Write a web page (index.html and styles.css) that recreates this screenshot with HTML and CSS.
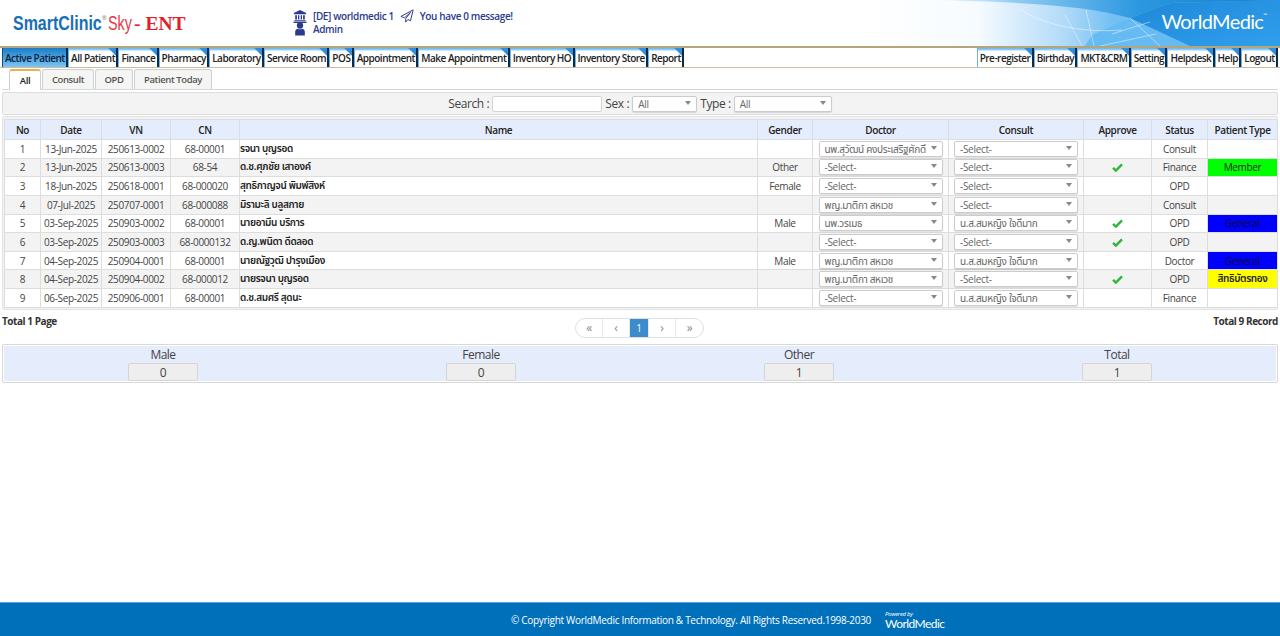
FILE: index.html
```html
<!DOCTYPE html>
<html lang="en">

<head>
    <meta charset="UTF-8">
    <meta name="viewport" content="width=device-width, initial-scale=1.0">
    <title>SmartClinic Sky - ENT</title>
    <link rel="stylesheet" href="styles.css">
</head>

<body>
    <div class="page">
        <header class="top">
            <svg class="top-art" viewBox="0 0 420 46">
                <defs>
                    <linearGradient id="artBase" x1="0" y1="0" x2="1" y2="0">
                        <stop offset="0" stop-color="#ffffff" />
                        <stop offset="0.28" stop-color="#f6fbff" />
                        <stop offset="0.48" stop-color="#b4dcf9" />
                        <stop offset="0.6" stop-color="#74c0f3" />
                        <stop offset="1" stop-color="#4aaeee" />
                    </linearGradient>
                    <linearGradient id="artBand" x1="0" y1="0" x2="1" y2="0">
                        <stop offset="0" stop-color="#ffffff" />
                        <stop offset="0.25" stop-color="#8fcaf2" />
                        <stop offset="0.6" stop-color="#2a97e0" />
                        <stop offset="1" stop-color="#1580cc" />
                    </linearGradient>
                    <linearGradient id="artRight" x1="0" y1="0" x2="1" y2="1">
                        <stop offset="0" stop-color="#1f88d8" />
                        <stop offset="1" stop-color="#2f9fec" />
                    </linearGradient>
                </defs>
                <rect width="420" height="46" fill="url(#artBase)" />
                <path d="M232 35L270 18L360 46H225Z" fill="#67bbf3" />
                <path d="M270 18L310 3L420 0V46H330Z" fill="url(#artRight)" />
                <path d="M70 0C160 2 225 5 270 18L310 3L420 0Z" fill="url(#artBand)" />
                <path d="M160 9C185 26 225 33 262 30M205 15L222 46M226 10L234 46M252 34L290 22M270 18L300 46M240 46L296 34" fill="none" stroke="#ffffff" stroke-opacity=".45" stroke-width="1" />
            </svg>
            <div class="logo">
                <span class="logo-smart">SmartClinic</span>
                <sup class="logo-reg">®</sup>
                <span class="logo-sky">Sky</span>
                <span class="logo-ent">- ENT</span>
            </div>
            <div class="info">
                <div class="info-row">
                    <svg class="ico" viewBox="0 0 16 16">
                        <path d="M8 1L1 4.5V6H15V4.5ZM2.5 7V12H4.5V7ZM5.7 7V12H7.2V7ZM8.8 7V12H10.3V7ZM11.5 7V12H13.5V7ZM1.5 12.8V14H14.5V12.8ZM.5 14.6V16H15.5V14.6Z" fill="#2b3a8c" />
                    </svg>
                    <span class="info-text">[DE] worldmedic 1</span>
                    <svg class="ico-plane" viewBox="0 0 16 16">
                        <path d="M15 1L1 8.5L5 10L12 4L6.5 11V15L9 12L12 13.5Z" fill="none" stroke="#2b3a8c" stroke-width="1.1" stroke-linejoin="round" />
                    </svg>
                    <span class="info-text">You have 0 message!</span>
                </div>
                <div class="info-row">
                    <svg class="ico" viewBox="0 0 16 16">
                        <circle cx="8" cy="4" r="3.6" fill="#2b3a8c" />
                        <path d="M2.5 15.5V11C2.5 9 4 8 5.5 7.6C7 8.6 9 8.6 10.5 7.6C12 8 13.5 9 13.5 11V15.5Z" fill="#2b3a8c" />
                    </svg>
                    <span class="info-text">Admin</span>
                </div>
            </div>
            <div class="brand">WorldMedic<sup class="brand-tm">™</sup></div>
        </header>

        <nav class="menu">
            <div class="menu-group">
                <a class="menu-item active">Active Patient</a>
                <a class="menu-item">All Patient</a>
                <a class="menu-item">Finance</a>
                <a class="menu-item">Pharmacy</a>
                <a class="menu-item">Laboratory</a>
                <a class="menu-item">Service Room</a>
                <a class="menu-item">POS</a>
                <a class="menu-item">Appointment</a>
                <a class="menu-item">Make Appointment</a>
                <a class="menu-item">Inventory HO</a>
                <a class="menu-item">Inventory Store</a>
                <a class="menu-item">Report</a>
            </div>
            <div class="menu-group">
                <a class="menu-item">Pre-register</a>
                <a class="menu-item">Birthday</a>
                <a class="menu-item">MKT&amp;CRM</a>
                <a class="menu-item">Setting</a>
                <a class="menu-item">Helpdesk</a>
                <a class="menu-item">Help</a>
                <a class="menu-item">Logout</a>
            </div>
        </nav>

        <div class="tabs">
            <a class="tab current">All</a>
            <a class="tab">Consult</a>
            <a class="tab">OPD</a>
            <a class="tab">Patient Today</a>
        </div>

        <div class="search-bar">
            <span>Search :</span>
            <span class="search-input"></span>
            <span>Sex :</span>
            <span class="sel sel-sex">All</span>
            <span>Type :</span>
            <span class="sel sel-type">All</span>
        </div>

        <div class="table-box">
            <table class="grid">
                <colgroup>
                    <col class="c-no">
                    <col class="c-date">
                    <col class="c-vn">
                    <col class="c-cn">
                    <col class="c-name">
                    <col class="c-gender">
                    <col class="c-doctor">
                    <col class="c-consult">
                    <col class="c-approve">
                    <col class="c-status">
                    <col class="c-type">
                </colgroup>
                <thead>
                    <tr>
                        <th>No</th>
                        <th>Date</th>
                        <th>VN</th>
                        <th>CN</th>
                        <th>Name</th>
                        <th>Gender</th>
                        <th>Doctor</th>
                        <th>Consult</th>
                        <th>Approve</th>
                        <th>Status</th>
                        <th>Patient Type</th>
                    </tr>
                </thead>
                <tbody>
                    <tr>
                        <td>1</td>
                        <td>13-Jun-2025</td>
                        <td>250613-0002</td>
                        <td>68-00001</td>
                        <td class="name">รจนา บุญรอด</td>
                        <td></td>
                        <td><span class="sel">นพ.สุวัฒน์ คงประเสริฐศักดิ์</span></td>
                        <td><span class="sel">-Select-</span></td>
                        <td></td>
                        <td>Consult</td>
                        <td></td>
                    </tr>
                    <tr>
                        <td>2</td>
                        <td>13-Jun-2025</td>
                        <td>250613-0003</td>
                        <td>68-54</td>
                        <td class="name">ด.ช.ศุภชัย เสาองค์</td>
                        <td>Other</td>
                        <td><span class="sel">-Select-</span></td>
                        <td><span class="sel">-Select-</span></td>
                        <td><svg class="check" viewBox="0 0 12 10"><path d="M1 5.5L4.2 8.5L11 1.5" /></svg></td>
                        <td>Finance</td>
                        <td class="type-member">Member</td>
                    </tr>
                    <tr>
                        <td>3</td>
                        <td>18-Jun-2025</td>
                        <td>250618-0001</td>
                        <td>68-000020</td>
                        <td class="name">สุทธิกาญจน์ พิมพ์สิงห์</td>
                        <td>Female</td>
                        <td><span class="sel">-Select-</span></td>
                        <td><span class="sel">-Select-</span></td>
                        <td></td>
                        <td>OPD</td>
                        <td></td>
                    </tr>
                    <tr>
                        <td>4</td>
                        <td>07-Jul-2025</td>
                        <td>250707-0001</td>
                        <td>68-000088</td>
                        <td class="name">มิรามะลิ บลูสกาย</td>
                        <td></td>
                        <td><span class="sel">พญ.มาติกา สหเวช</span></td>
                        <td><span class="sel">-Select-</span></td>
                        <td></td>
                        <td>Consult</td>
                        <td></td>
                    </tr>
                    <tr>
                        <td>5</td>
                        <td>03-Sep-2025</td>
                        <td>250903-0002</td>
                        <td>68-00001</td>
                        <td class="name">นายอามีน บริการ</td>
                        <td>Male</td>
                        <td><span class="sel">นพ.วรเมธ</span></td>
                        <td><span class="sel">น.ส.สมหญิง ใจดีมาก</span></td>
                        <td><svg class="check" viewBox="0 0 12 10"><path d="M1 5.5L4.2 8.5L11 1.5" /></svg></td>
                        <td>OPD</td>
                        <td class="type-general">General</td>
                    </tr>
                    <tr>
                        <td>6</td>
                        <td>03-Sep-2025</td>
                        <td>250903-0003</td>
                        <td>68-0000132</td>
                        <td class="name">ด.ญ.พนิดา ดีดลอด</td>
                        <td></td>
                        <td><span class="sel">-Select-</span></td>
                        <td><span class="sel">-Select-</span></td>
                        <td><svg class="check" viewBox="0 0 12 10"><path d="M1 5.5L4.2 8.5L11 1.5" /></svg></td>
                        <td>OPD</td>
                        <td></td>
                    </tr>
                    <tr>
                        <td>7</td>
                        <td>04-Sep-2025</td>
                        <td>250904-0001</td>
                        <td>68-00001</td>
                        <td class="name">นายณัฐวุฒิ ปารุงเมือง</td>
                        <td>Male</td>
                        <td><span class="sel">พญ.มาติกา สหเวช</span></td>
                        <td><span class="sel">น.ส.สมหญิง ใจดีมาก</span></td>
                        <td></td>
                        <td>Doctor</td>
                        <td class="type-general">General</td>
                    </tr>
                    <tr>
                        <td>8</td>
                        <td>04-Sep-2025</td>
                        <td>250904-0002</td>
                        <td>68-000012</td>
                        <td class="name">นายรจนา บุญรอด</td>
                        <td></td>
                        <td><span class="sel">พญ.มาติกา สหเวช</span></td>
                        <td><span class="sel">-Select-</span></td>
                        <td><svg class="check" viewBox="0 0 12 10"><path d="M1 5.5L4.2 8.5L11 1.5" /></svg></td>
                        <td>OPD</td>
                        <td class="type-gold">สิทธิบัตรทอง</td>
                    </tr>
                    <tr>
                        <td>9</td>
                        <td>06-Sep-2025</td>
                        <td>250906-0001</td>
                        <td>68-00001</td>
                        <td class="name">ด.ช.สมศรี สุดนะ</td>
                        <td></td>
                        <td><span class="sel">-Select-</span></td>
                        <td><span class="sel">น.ส.สมหญิง ใจดีมาก</span></td>
                        <td></td>
                        <td>Finance</td>
                        <td></td>
                    </tr>
                </tbody>
            </table>
        </div>

        <div class="pager-row">
            <b class="pager-total">Total 1 Page</b>
            <div class="pager">
                <a class="pg">«</a>
                <a class="pg">‹</a>
                <a class="pg on">1</a>
                <a class="pg">›</a>
                <a class="pg">»</a>
            </div>
            <b class="pager-total">Total 9 Record</b>
        </div>

        <div class="summary">
            <div class="sum-item"><span>Male</span><span class="sum-val">0</span></div>
            <div class="sum-item"><span>Female</span><span class="sum-val">0</span></div>
            <div class="sum-item"><span>Other</span><span class="sum-val">1</span></div>
            <div class="sum-item"><span>Total</span><span class="sum-val">1</span></div>
        </div>

        <footer class="foot">
            <span>© Copyright WorldMedic Information &amp; Technology. All Rights Reserved.1998-2030</span>
            <div class="foot-logo">
                <i class="foot-by">Powered by</i>
                <span class="foot-brand">WorldMedic</span>
            </div>
        </footer>
    </div>
</body>

</html>
```

FILE: styles.css
```css
* {
    padding: 0;
    margin: 0;
    box-sizing: border-box;
}

html,
body {
    height: 100%;
    overflow: hidden;
}

body {
    font-family: "Open Sans", "Noto Sans", "Noto Sans Thai", "DejaVu Sans", sans-serif;
    font-size: 10px;
    letter-spacing: -.35px;
    color: #333;
    background: white;
}

.page {
    height: 100%;
    display: flex;
    flex-direction: column;
}

/* header */
.top {
    height: 46px;
    flex: none;
    display: flex;
    align-items: center;
    position: relative;
    overflow: hidden;
}

.top-art {
    position: absolute;
    right: 0;
    top: 0;
    width: 420px;
    height: 46px;
}

.logo {
    width: 293px;
    padding-left: 13px;
    white-space: nowrap;
    display: flex;
    align-items: baseline;
    letter-spacing: 0;
    line-height: 46px;
}

.logo-smart {
    display: inline-block;
    font-family: "Liberation Sans", sans-serif;
    font-weight: bold;
    color: #1770b4;
    font-size: 21px;
    transform: scaleX(.76);
    transform-origin: left;
    margin-right: -28px;
}

.logo-reg {
    align-self: flex-start;
    margin-top: 15px;
    font-size: 6px;
    line-height: 6px;
    color: #777;
    width: 6px;
}

.logo-sky {
    display: inline-block;
    font-family: "Liberation Sans", sans-serif;
    color: #df3b46;
    font-size: 20px;
    transform: scaleX(.72);
    transform-origin: left;
    margin-right: -9px;
}

.logo-ent {
    font-family: "Liberation Serif", serif;
    font-weight: bold;
    color: #e01f2d;
    font-size: 19.5px;
    margin-left: 2px;
}

.info {
    display: flex;
    flex-direction: column;
    padding-bottom: 2px;
}

.info-row {
    display: flex;
    align-items: center;
    height: 13px;
    color: #2b3a8c;
    font-weight: 600;
    font-size: 10px;
    letter-spacing: -.38px;
}

.ico {
    width: 14px;
    height: 14px;
    margin-right: 6px;
}

.ico-plane {
    width: 14px;
    height: 14px;
    margin: 0 6px;
}

.brand {
    position: absolute;
    right: 13px;
    top: 9px;
    color: white;
    font-family: "Lato", "Open Sans", sans-serif;
    font-size: 20px;
    letter-spacing: -.65px;
}

.brand-tm {
    font-size: 5px;
    vertical-align: 12px;
    line-height: 0;
    letter-spacing: 0;
}

/* menu */
.menu {
    height: 22px;
    flex: none;
    display: flex;
    justify-content: space-between;
    padding: 0 2px;
    border-top: 2px solid #b5a57a;
    border-bottom: 1px solid #c9bd9c;
}

.menu-group {
    display: flex;
    gap: 0;
}

.menu-item {
    display: block;
    height: 19px;
    line-height: 20px;
    padding: 0 1.3px 0 2px;
    font-size: 10px;
    font-weight: 600;
    letter-spacing: -.5px;
    color: #222;
    white-space: nowrap;
    border-left: 1px solid #6db6ea;
    border-right: 2px solid #0d2c4d;
    background:
        linear-gradient(225deg, #2f8fdc 0, #2f8fdc 5px, transparent 6px),
        linear-gradient(#62b4ee 0, #9dd2f5 2px, #fff 3px);
}

.menu-item.active {
    color: #0c2238;
    border-left: 1px solid #0d4f85;
    background: linear-gradient(#1c7dc8, #7cc4f5);
}

/* tabs */
.tabs {
    height: 21px;
    flex: none;
    display: flex;
    gap: 1px;
    margin: 1px 2px 0;
    padding-left: 7px;
    border-bottom: 1px solid #d5d8dc;
}

.tab {
    height: 20px;
    line-height: 19px;
    text-align: center;
    font-size: 9.5px;
    font-weight: 600;
    letter-spacing: -.4px;
    color: #555;
    background: #f5f5f3;
    border: 1px solid #ccd0d4;
    border-bottom: 0;
    border-radius: 3px 3px 0 0;
}

.tab:nth-child(1) {
    width: 32px;
}

.tab:nth-child(2) {
    width: 52px;
}

.tab:nth-child(3) {
    width: 38px;
}

.tab:nth-child(4) {
    width: 78px;
}

.tab.current {
    background: white;
    color: #222;
    border-top: 2px solid #eeb04a;
    height: 21px;
}

/* search */
.search-bar {
    height: 23px;
    flex: none;
    margin: 2px 2px 0;
    display: flex;
    align-items: center;
    justify-content: center;
    gap: 3px;
    background: #f3f3f3;
    border: 1px solid #ddd;
    border-radius: 2px;
    font-size: 12px;
    letter-spacing: -.4px;
    color: #444;
}

.search-input {
    width: 110px;
    height: 16px;
    background: white;
    border: 1px solid #d5d5d5;
    border-radius: 2px;
}

.sel {
    display: block;
    position: relative;
    height: 16px;
    line-height: 15px;
    padding: 0 14px 0 5px;
    margin: 0 auto;
    width: 124px;
    font-size: 10px;
    letter-spacing: -.3px;
    color: #666;
    text-align: left;
    white-space: nowrap;
    overflow: hidden;
    background: white;
    border: 1px solid #ccc;
    border-radius: 2px;
    box-shadow: 0 1px 1px rgba(0, 0, 0, .12);
}

.sel::after {
    content: '';
    position: absolute;
    right: 5px;
    top: 4px;
    border-left: 3px solid transparent;
    border-right: 3px solid transparent;
    border-top: 4px solid #888;
}

.sel-sex {
    width: 65px;
    margin: 0;
}

.sel-type {
    width: 98px;
    margin: 0;
}

/* table */
.table-box {
    flex: none;
    margin: 1px 2px 0;
    padding: 2px 1px 1px;
    height: 194px;
    border: 1px solid #e3e3e3;
    border-radius: 2px;
    background: #f3f3f3;
}

.grid {
    width: 1273px;
    table-layout: fixed;
    border-collapse: collapse;
    background: white;
}

.c-no { width: 36px; }
.c-date { width: 61px; }
.c-vn { width: 69px; }
.c-cn { width: 69px; }
.c-name { width: 518px; }
.c-gender { width: 55px; }
.c-doctor { width: 136px; }
.c-consult { width: 135px; }
.c-approve { width: 68px; }
.c-status { width: 56px; }
.c-type { width: 70px; }

.grid th {
    height: 20px;
    font-size: 10px;
    font-weight: 600;
    color: #222;
    background: #e5ecfb;
    border: 1px solid #d8dde6;
}

.grid td {
    height: 18.65px;
    padding: 0;
    text-align: center;
    font-size: 10px;
    color: #444;
    border: 1px solid #ddd;
    white-space: nowrap;
}

.grid tbody tr:nth-child(even) td {
    background: #f3f3f3;
}

.grid td.name {
    text-align: left;
    font-weight: 600;
    color: #222;
}

.grid tbody tr td.type-member {
    background: #00ff00;
    color: #222;
}

.grid tbody tr td.type-general {
    background: #0000ff;
    color: #111;
}

.grid tbody tr td.type-gold {
    background: #ffff00;
    color: #222;
    font-weight: 600;
}

.check {
    width: 11px;
    height: 9px;
    display: block;
    margin: 0 auto;
}

.check path {
    fill: none;
    stroke: #2fb53a;
    stroke-width: 2.6;
}

/* pager */
.pager-row {
    flex: none;
    height: 34px;
    margin: 0 2px;
    display: flex;
    justify-content: space-between;
    align-items: flex-start;
    position: relative;
    padding-top: 4px;
}

.pager-total {
    font-size: 10px;
    font-weight: 700;
    letter-spacing: -.45px;
    color: #333;
}

.pager {
    position: absolute;
    left: 573px;
    top: 8px;
    display: flex;
    height: 20px;
    border: 1px solid #e0e0e0;
    border-radius: 10px;
    overflow: hidden;
}

.pg {
    width: 27px;
    line-height: 18px;
    text-align: center;
    font-size: 12px;
    color: #888;
    border-right: 1px solid #e8e8e8;
}

.pg:last-child {
    border-right: 0;
}

.pg.on {
    width: 19px;
    font-size: 10px;
    background: #3c8bcd;
    color: white;
}

/* summary */
.summary {
    flex: none;
    height: 39px;
    margin: 0 2px;
    padding: 2px 1px;
    display: grid;
    grid-template-columns: repeat(4, 318px);
    background: #e5ecfb;
    border: 1px solid #d8d8d8;
    box-shadow: inset 0 0 0 1px #fff;
    border-radius: 2px;
}

.sum-item {
    display: flex;
    flex-direction: column;
    align-items: center;
    font-size: 12px;
    letter-spacing: -.5px;
    line-height: 15px;
    color: #444;
}

.sum-val {
    width: 70px;
    height: 18px;
    line-height: 17px;
    text-align: center;
    background: #eee;
    border: 1px solid #d5d5d5;
    border-radius: 2px;
    margin-top: 1px;
}

/* footer */
.foot {
    margin-top: auto;
    height: 34px;
    flex: none;
    display: flex;
    align-items: center;
    justify-content: center;
    gap: 14px;
    padding-left: 176px;
    background: #0070bb;
    border-top: 1px solid #5aa5d8;
    color: white;
    font-size: 10px;
    letter-spacing: -.3px;
}

.foot-logo {
    display: flex;
    flex-direction: column;
    width: 60px;
}

.foot-by {
    font-size: 6px;
    line-height: 8px;
}

.foot-brand {
    font-family: "Lato", "Open Sans", sans-serif;
    font-size: 12px;
    line-height: 12px;
    letter-spacing: -.55px;
}
```
